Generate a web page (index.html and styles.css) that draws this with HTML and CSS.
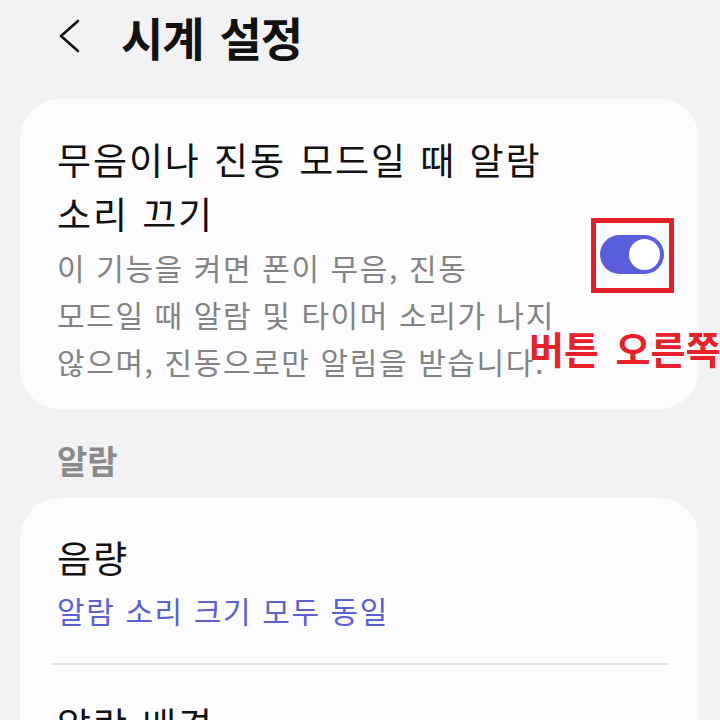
FILE: index.html
```html
<!DOCTYPE html>
<html lang="ko">
<head>
<meta charset="utf-8">
<title>시계 설정</title>
<link rel="stylesheet" href="styles.css">
</head>
<body>
<div class="page">
  <header class="topbar">
    <svg class="back" width="28" height="36" viewBox="0 0 28 36" aria-hidden="true">
      <polyline points="22,3 5,18 22,33" fill="none" stroke="#111" stroke-width="2.6" stroke-linecap="round" stroke-linejoin="round"/>
    </svg>
    <h1 class="page-title">시계 설정</h1>
  </header>

  <section class="card card-toggle">
    <div class="toggle-text">
      <div class="item-title">무음이나 진동 모드일 때 알람<br>소리 끄기</div>
      <div class="item-desc">이 기능을 켜면 폰이 무음, 진동<br>모드일 때 알람 및 타이머 소리가 나지<br>않으며, 진동으로만 알림을 받습니다.</div>
    </div>
    <div class="switch-wrap">
      <span class="switch"><span class="knob"></span></span>
      <span class="annot-box"></span>
    </div>
    <div class="annot-text">버튼 오른쪽</div>
  </section>

  <div class="section-label">알람</div>

  <section class="card">
    <div class="row">
      <div class="item-title">음량</div>
      <div class="item-sub">알람 소리 크기 모두 동일</div>
    </div>
    <div class="divider"></div>
    <div class="row">
      <div class="item-title">알람 배경</div>
    </div>
  </section>
</div>
</body>
</html>
```

FILE: styles.css
```css
html, body {
  margin: 0;
  padding: 0;
  background: #f2f2f4;
}
body {
  font-family: "Noto Sans CJK KR", "Noto Sans", sans-serif;
  width: 720px;
  height: 720px;
  overflow: hidden;
}
.page {
  width: 720px;
}
.topbar {
  height: 72px;
  display: flex;
  align-items: center;
  padding-left: 56px;
}
.back {
  display: block;
  margin-right: 37px;
}
.page-title {
  margin: 0;
  font-size: 46px;
  font-weight: 700;
  line-height: 56px;
  color: #111;
  letter-spacing: -1px;
  word-spacing: 4px;
}
.card {
  margin: 0 21px 0 20px;
  background: #fcfcfe;
  border-radius: 40px;
  position: relative;
}
.card-toggle {
  margin-top: 27px;
  display: flex;
  align-items: center;
  justify-content: space-between;
  padding: 33px 35px 24px 37px;
}
.item-title {
  font-size: 37px;
  line-height: 54px;
  color: #111;
  letter-spacing: 1.9px;
  word-spacing: 1px;
}
.item-desc {
  margin-top: 4px;
  font-size: 30px;
  line-height: 47px;
  color: #838383;
  letter-spacing: 1.6px;
}
.switch-wrap {
  position: relative;
  flex: none;
  margin-bottom: 8px;
}
.switch {
  display: block;
  position: relative;
  width: 64px;
  height: 39px;
  border-radius: 20px;
  background: #5b5edb;
}
.knob {
  position: absolute;
  right: 4px;
  top: 4px;
  width: 31px;
  height: 31px;
  border-radius: 50%;
  background: #fff;
}
.annot-box {
  position: absolute;
  left: -9px;
  right: -10px;
  top: -17px;
  bottom: -19px;
  border: 5px solid #e3202a;
}
.annot-text {
  position: absolute;
  left: 509px;
  top: 226px;
  font-size: 38px;
  font-weight: 700;
  line-height: 46px;
  color: #e8202a;
  white-space: nowrap;
  word-spacing: 6px;
}
.section-label {
  margin: 30px 0 17px 57px;
  font-size: 33px;
  font-weight: 700;
  line-height: 42px;
  color: #8a8a8a;
}
.row {
  padding: 32px 36px 30px 37px;
}
.item-sub {
  margin-top: 3px;
  font-size: 30px;
  line-height: 46px;
  color: #5d60cf;
  letter-spacing: 1.6px;
}
.divider {
  height: 2px;
  margin: 0 31px 0 32px;
  background: #e2e2e6;
}
```
